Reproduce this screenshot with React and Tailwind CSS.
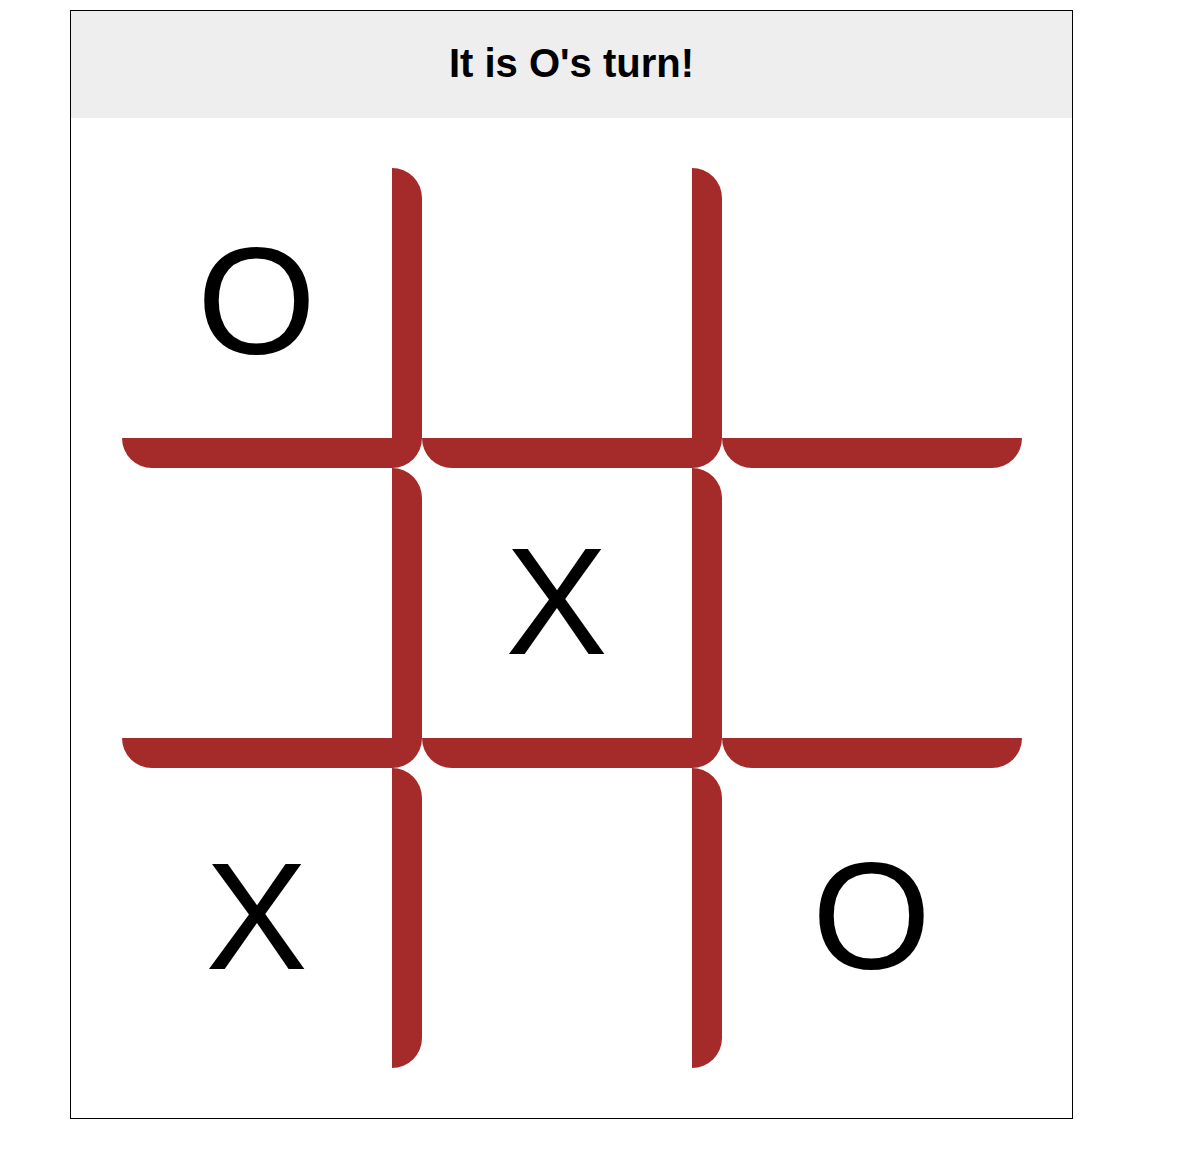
import React from "react";

const board = [
  ["O", "", ""],
  ["", "X", ""],
  ["X", "", "O"],
];

// border classes per cell: right border except last column, bottom border except last row
const cellBorders = [
  ["border-r-[30px] border-b-[30px]", "border-r-[30px] border-b-[30px]", "border-b-[30px]"],
  ["border-r-[30px] border-b-[30px]", "border-r-[30px] border-b-[30px]", "border-b-[30px]"],
  ["border-r-[30px]", "border-r-[30px]", ""],
];

export default function App() {
  return (
    <div className="min-h-screen bg-white pl-[70px] pt-[10px] font-['Liberation_Sans',Arial,sans-serif] text-black">
      <div className="w-[1003px] border border-black">
        <div className="h-[107px] bg-[#eeeeee] flex items-center justify-center pb-[3px]">
          <h1 className="text-[40px] font-bold leading-none">It is O's turn!</h1>
        </div>

        <div className="w-[900px] mx-auto my-[50px] grid grid-cols-3">
          {board.map((row, r) =>
            row.map((mark, c) => (
              <div
                key={`${r}-${c}`}
                className={`w-[300px] h-[300px] box-border rounded-[30px] border-solid border-[#a52a2a] flex items-center justify-center ${cellBorders[r][c]}`}
              >
                <span className="text-[153px] leading-none -mt-[5px]">{mark}</span>
              </div>
            ))
          )}
        </div>
      </div>
    </div>
  );
}
